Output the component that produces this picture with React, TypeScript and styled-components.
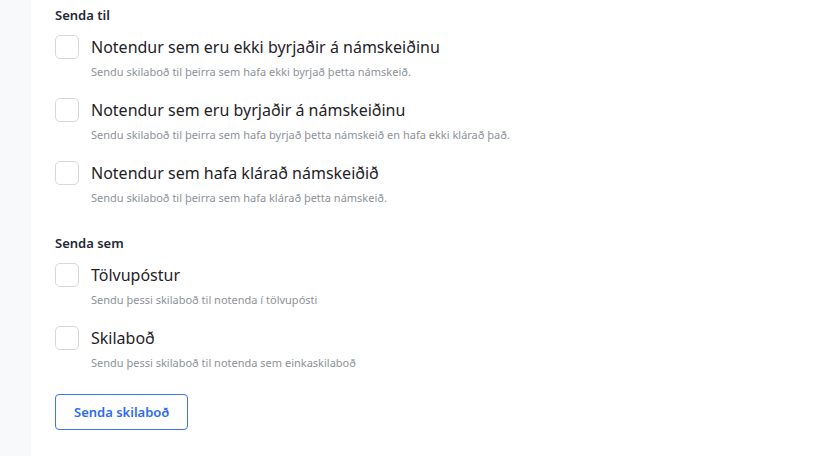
import React from 'react';
import styled, { createGlobalStyle } from 'styled-components';

const GlobalStyle = createGlobalStyle`
  html, body {
    margin: 0;
    padding: 0;
    background: #ffffff;
    font-family: "Noto Sans", "Open Sans", sans-serif;
  }
`;

const Page = styled.div`
  display: flex;
  min-height: 456px;
`;

const SideStrip = styled.div`
  width: 31px;
  flex-shrink: 0;
  background-color: #f8f9fb;
`;

const Content = styled.div`
  flex: 1;
  padding: 5px 24px 24px 24px;
  display: flex;
  flex-direction: column;
  align-items: flex-start;
`;

const SectionTitle = styled.h3`
  margin: 0 0 10px 0;
  font-size: 13px;
  line-height: 20px;
  font-weight: 600;
  color: #1f2937;
`;

const OptionList = styled.div<{ $last?: boolean }>`
  display: flex;
  flex-direction: column;
  gap: 18px;
  margin-bottom: ${(p) => (p.$last ? '23px' : '27px')};
`;

const OptionRow = styled.label`
  display: flex;
  align-items: flex-start;
  gap: 12px;
  cursor: pointer;
`;

const Box = styled.span`
  width: 24px;
  height: 24px;
  box-sizing: border-box;
  border: 1px solid #d5d8dd;
  border-radius: 5px;
  background: #ffffff;
  flex-shrink: 0;
`;

const OptionText = styled.div`
  display: flex;
  flex-direction: column;
  gap: 5px;
`;

const OptionLabel = styled.span`
  font-size: 16px;
  line-height: 24px;
  color: #1f2328;
`;

const OptionHint = styled.span`
  font-size: 11px;
  line-height: 16px;
  color: #8e9299;
`;

const SendButton = styled.button`
  height: 36px;
  padding: 0 18px;
  border: 1px solid #3b74f0;
  border-radius: 4px;
  background: #ffffff;
  color: #2f6bef;
  font-family: inherit;
  font-size: 13px;
  font-weight: 600;
  cursor: pointer;
`;

type Option = { label: string; hint: string };

const recipients: Option[] = [
  { label: 'Notendur sem eru ekki byrjaðir á námskeiðinu', hint: 'Sendu skilaboð til þeirra sem hafa ekki byrjað þetta námskeið.' },
  { label: 'Notendur sem eru byrjaðir á námskeiðinu', hint: 'Sendu skilaboð til þeirra sem hafa byrjað þetta námskeið en hafa ekki klárað það.' },
  { label: 'Notendur sem hafa klárað námskeiðið', hint: 'Sendu skilaboð til þeirra sem hafa klárað þetta námskeið.' },
];

const channels: Option[] = [
  { label: 'Tölvupóstur', hint: 'Sendu þessi skilaboð til notenda í tölvupósti' },
  { label: 'Skilaboð', hint: 'Sendu þessi skilaboð til notenda sem einkaskilaboð' },
];

function Options({ items, last }: { items: Option[]; last?: boolean }) {
  return (
    <OptionList $last={last}>
      {items.map((item) => (
        <OptionRow key={item.label}>
          <Box />
          <OptionText>
            <OptionLabel>{item.label}</OptionLabel>
            <OptionHint>{item.hint}</OptionHint>
          </OptionText>
        </OptionRow>
      ))}
    </OptionList>
  );
}

export default function App() {
  return (
    <>
      <GlobalStyle />
      <Page>
        <SideStrip />
        <Content>
          <SectionTitle>Senda til</SectionTitle>
          <Options items={recipients} />
          <SectionTitle>Senda sem</SectionTitle>
          <Options items={channels} last />
          <SendButton>Senda skilaboð</SendButton>
        </Content>
      </Page>
    </>
  );
}
